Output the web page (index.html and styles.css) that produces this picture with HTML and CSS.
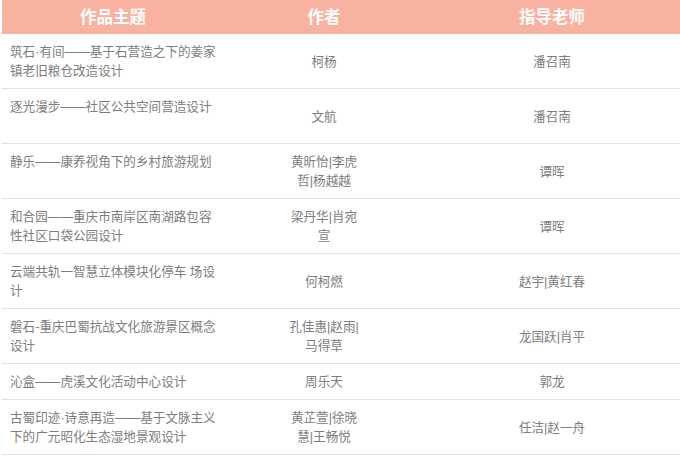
FILE: index.html
```html
<!DOCTYPE html>
<html lang="zh-CN">
<head>
<meta charset="utf-8">
<title>作品列表</title>
<link rel="stylesheet" href="styles.css">
</head>
<body>
<div class="page">
  <table class="works">
    <colgroup>
      <col class="c-title">
      <col class="c-author">
      <col class="c-tutor">
    </colgroup>
    <thead>
      <tr>
        <th>作品主题</th>
        <th>作者</th>
        <th>指导老师</th>
      </tr>
    </thead>
    <tbody>
      <tr>
        <td class="title">筑石·有间——基于石营造之下的姜家镇老旧粮仓改造设计</td>
        <td class="author"><div class="names">柯杨</div></td>
        <td class="tutor">潘召南</td>
      </tr>
      <tr>
        <td class="title tall">逐光漫步——社区公共空间营造设计</td>
        <td class="author"><div class="names">文航</div></td>
        <td class="tutor">潘召南</td>
      </tr>
      <tr>
        <td class="title">静乐——康养视角下的乡村旅游规划</td>
        <td class="author"><div class="names">黄昕怡|李虎哲|杨越越</div></td>
        <td class="tutor">谭晖</td>
      </tr>
      <tr>
        <td class="title">和合园——重庆市南岸区南湖路包容性社区口袋公园设计</td>
        <td class="author"><div class="names">梁丹华|肖宛宣</div></td>
        <td class="tutor">谭晖</td>
      </tr>
      <tr>
        <td class="title">云端共轨一智慧立体模块化停车 场设计</td>
        <td class="author"><div class="names">何柯燃</div></td>
        <td class="tutor">赵宇|黄红春</td>
      </tr>
      <tr>
        <td class="title">磐石-重庆巴蜀抗战文化旅游景区概念设计</td>
        <td class="author"><div class="names">孔佳惠|赵雨|马得草</div></td>
        <td class="tutor">龙国跃|肖平</td>
      </tr>
      <tr>
        <td class="title">沁盒——虎溪文化活动中心设计</td>
        <td class="author"><div class="names">周乐天</div></td>
        <td class="tutor">郭龙</td>
      </tr>
      <tr>
        <td class="title">古蜀印迹·诗意再造——基于文脉主义下的广元昭化生态湿地景观设计</td>
        <td class="author"><div class="names">黄芷萱|徐晓慧|王畅悦</div></td>
        <td class="tutor">任洁|赵一舟</td>
      </tr>
    </tbody>
  </table>
</div>
</body>
</html>
```
FILE: styles.css
```css
html, body {
  margin: 0;
  padding: 0;
  background: #ffffff;
}

.page {
  padding: 0 0 0 2px;
  font-family: "Liberation Sans", "Noto Sans CJK SC", sans-serif;
}

.works {
  width: 678px;
  border-collapse: collapse;
  table-layout: fixed;
}

.c-title { width: 222px; }
.c-author { width: 200px; }
.c-tutor { width: 256px; }

.works th {
  height: 34px;
  padding: 0;
  background: #f9b1a0;
  color: #ffffff;
  font-size: 16.5px;
  font-weight: 700;
  text-align: center;
  vertical-align: middle;
  line-height: 20px;
}

.works td {
  padding: 9px 0 7px;
  border-bottom: 1px solid #e2e2e2;
  color: #7d7d7d;
  font-size: 12.6px;
  line-height: 19px;
  vertical-align: middle;
  text-align: center;
}

.works td.title {
  padding-left: 8px;
  padding-right: 4px;
  text-align: left;
  vertical-align: top;
}

.works td.tall {
  height: 38px;
}

.names {
  width: 76px;
  margin: 0 auto;
}
```
